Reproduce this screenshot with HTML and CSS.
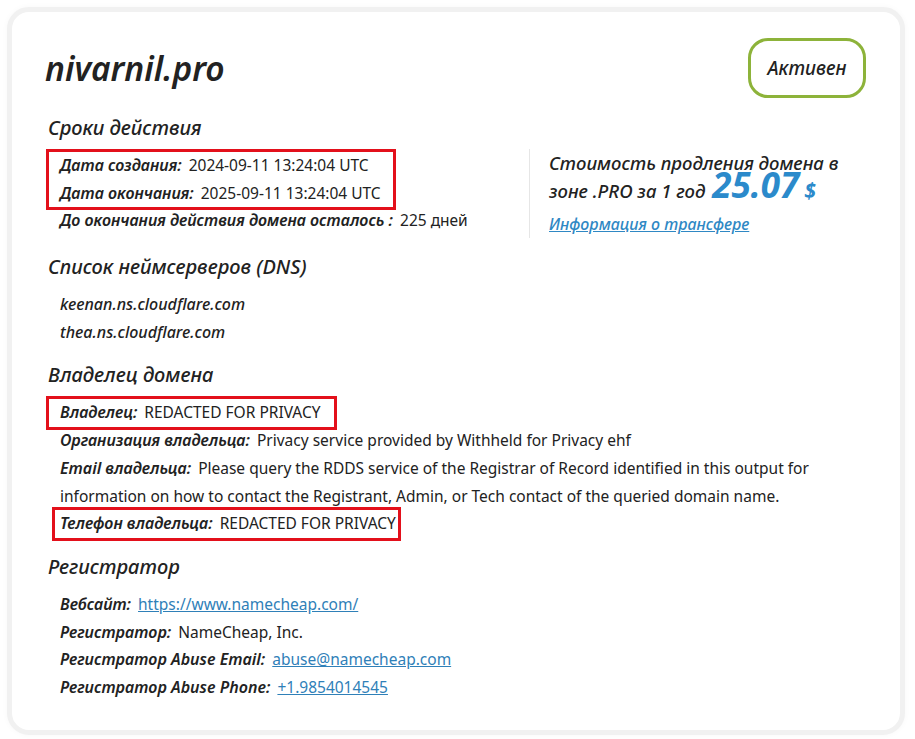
FILE: index.html
```html
<!DOCTYPE html>
<html lang="ru">
<head>
<meta charset="utf-8">
<title>nivarnil.pro</title>
<link rel="stylesheet" href="styles.css">
</head>
<body>
<div class="card">
  <header class="head">
    <h1 class="domain">nivarnil.pro</h1>
    <span class="status">Активен</span>
  </header>

  <section class="sec sec-first">
    <h2 class="sec-title">Сроки действия</h2>
    <div class="split">
      <div class="left rows">
        <div class="hl hl-a">
          <div class="row"><span class="lbl">Дата создания:</span><span class="val">2024-09-11 13:24:04 UTC</span></div>
          <div class="row"><span class="lbl">Дата окончания:</span><span class="val">2025-09-11 13:24:04 UTC</span></div>
        </div>
        <div class="row"><span class="lbl">До окончания действия домена осталось :</span><span class="val">225 дней</span></div>
      </div>
      <div class="price">
        <div class="price-line">Стоимость продления домена в</div>
        <div class="price-line">зоне .PRO за 1 год <span class="num">25.07</span> <span class="cur">$</span></div>
        <a class="transfer" href="#">Информация о трансфере</a>
      </div>
    </div>
  </section>

  <section class="sec">
    <h2 class="sec-title">Список неймсерверов (DNS)</h2>
    <div class="rows">
      <div class="row ns">keenan.ns.cloudflare.com</div>
      <div class="row ns">thea.ns.cloudflare.com</div>
    </div>
  </section>

  <section class="sec">
    <h2 class="sec-title">Владелец домена</h2>
    <div class="rows wide">
      <div class="hl hl-b">
        <div class="row"><span class="lbl">Владелец:</span><span class="val">REDACTED FOR PRIVACY</span></div>
      </div>
      <div class="row"><span class="lbl">Организация владельца:</span><span class="val">Privacy service provided by Withheld for Privacy ehf</span></div>
      <div class="row"><span class="lbl">Email владельца:</span><span class="val">Please query the RDDS service of the Registrar of Record identified in this output for information on how to contact the Registrant, Admin, or Tech contact of the queried domain name.</span></div>
      <div class="hl hl-c">
        <div class="row"><span class="lbl">Телефон владельца:</span><span class="val">REDACTED FOR PRIVACY</span></div>
      </div>
    </div>
  </section>

  <section class="sec">
    <h2 class="sec-title">Регистратор</h2>
    <div class="rows">
      <div class="row"><span class="lbl">Вебсайт:</span><a class="val link" href="#">https://www.namecheap.com/</a></div>
      <div class="row"><span class="lbl">Регистратор:</span><span class="val">NameCheap, Inc.</span></div>
      <div class="row"><span class="lbl">Регистратор Abuse Email:</span><a class="val link" href="#">abuse@namecheap.com</a></div>
      <div class="row"><span class="lbl">Регистратор Abuse Phone:</span><a class="val link" href="#">+1.9854014545</a></div>
    </div>
  </section>
</div>
</body>
</html>
```

FILE: styles.css
```css
html, body {
  margin: 0;
  padding: 0;
  background: #ffffff;
}

body {
  font-family: "Noto Sans", "Open Sans", sans-serif;
  color: #222222;
}

.card {
  margin: 7px 10px 6px 7px;
  border: 5px solid #f1f1f1;
  border-radius: 22px;
  padding: 26px 34px 28px 34px;
  box-shadow: 0 0 6px rgba(0, 0, 0, 0.03);
  background: #ffffff;
}

.head {
  display: flex;
  justify-content: space-between;
  align-items: center;
  height: 60px;
}

.domain {
  margin: 0 0 0 -1px;
  font-style: italic;
  font-weight: 600;
  font-size: 33.5px;
  line-height: 44px;
  color: #222222;
}

.status {
  box-sizing: border-box;
  width: 118px;
  height: 60px;
  border: 3px solid #8db33a;
  border-radius: 20px;
  display: flex;
  align-items: center;
  justify-content: center;
  font-style: italic;
  font-weight: 500;
  font-size: 19px;
  color: #222222;
}

.sec {
  margin-top: 14px;
}

.sec-first {
  margin-top: 15px;
}

.sec-title {
  margin: 0 0 9px 2px;
  font-style: italic;
  font-weight: 500;
  font-size: 20px;
  line-height: 30px;
  color: #222222;
}

.split {
  display: flex;
  align-items: flex-start;
}

.left {
  width: 469px;
  flex: none;
}

.rows {
  padding-left: 14px;
}

.row {
  line-height: 27.7px;
  font-size: 15.5px;
}

.lbl {
  font-style: italic;
  font-weight: 600;
  font-size: 16px;
  margin-right: 7px;
}

.val {
  font-weight: 400;
  font-size: 15.5px;
}

.ns {
  font-style: italic;
  font-weight: 500;
  font-size: 16px;
}

.link {
  color: #2f80b8;
  text-decoration: underline;
}

.wide {
  max-width: 760px;
}

.hl {
  width: fit-content;
  outline: 3px solid #e3101b;
}

.hl-a {
  margin-left: -11px;
  padding: 0 12px 0 11px;
}

.hl-b {
  margin-left: -11px;
  padding: 0 13px 0 11px;
}

.hl-c {
  margin-left: -5px;
  padding: 0 2px 0 5px;
}

.price {
  margin-top: -3px;
  border-left: 1px solid #e6e6e6;
  padding-left: 19px;
  flex: 1;
}

.price-line {
  font-style: italic;
  font-weight: 500;
  font-size: 18.5px;
  line-height: 28px;
  white-space: nowrap;
}

.num {
  margin-left: 2px;
  font-size: 35px;
  font-weight: 700;
  color: #2b8acb;
  line-height: 14px;
}

.cur {
  font-size: 21px;
  font-weight: 700;
  color: #2b8acb;
  line-height: 14px;
}

.transfer {
  display: block;
  margin-top: 5px;
  font-style: italic;
  font-weight: 500;
  font-size: 16px;
  line-height: 28px;
  color: #2f88c4;
  text-decoration: underline;
}
```
